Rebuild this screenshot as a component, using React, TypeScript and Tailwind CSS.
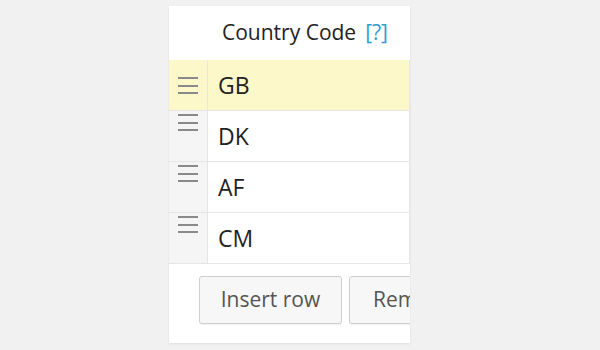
const rows = [
	{ code: "GB", active: true },
	{ code: "DK", active: false },
	{ code: "AF", active: false },
	{ code: "CM", active: false },
];

function Handle() {
	return (
		<div className="flex w-[20px] flex-col gap-[5.5px]">
			<span className="h-[2px] w-full bg-[#8a8a8a]" />
			<span className="h-[2px] w-full bg-[#8a8a8a]" />
			<span className="h-[2px] w-full bg-[#8a8a8a]" />
		</div>
	);
}

export default function App() {
	return (
		<div className="h-[350px] w-[600px] bg-[#f1f1f1] pt-[6px] pl-[169px] font-['Open_Sans',sans-serif]">
			<div className="h-[337px] w-[241px] overflow-hidden bg-white shadow-[0_1px_2px_rgba(0,0,0,0.08)]">
				<div className="flex h-[54px] items-center pl-[53px] text-[21px] text-[#222]">
					<span>Country Code</span>
					<span className="ml-[9px] text-[#2a9fd6]">[?]</span>
				</div>
				<div className="w-[241px]">
					{rows.map((row) => (
						<div
							key={row.code}
							className={
								row.active
									? "flex h-[51px] border-b border-[#e6e6e6] bg-[#fcf8c9]"
									: "flex h-[51px] border-b border-[#e6e6e6]"
							}
						>
							<div
								className={
									row.active
										? "flex w-[39px] items-center justify-center border-r border-[#e6e6e6] pt-[1px]"
										: "flex w-[39px] justify-center border-r border-[#e6e6e6] bg-[#f5f5f5] pt-[3px]"
								}
							>
								<Handle />
							</div>
							<div className="flex flex-1 items-center border-r border-[#e6e6e6] pl-[10px] text-[23px] text-[#222]">
								{row.code}
							</div>
						</div>
					))}
				</div>
				<div className="flex gap-[7px] pt-[12px] pl-[30px]">
					<button className="h-[48px] w-[143px] shrink-0 rounded-[3px] border border-[#cfcfcf] bg-[#f7f7f7] text-[21px] text-[#555] shadow-[0_1px_1px_rgba(0,0,0,0.06)]">
						Insert row
					</button>
					<button className="h-[48px] w-[170px] shrink-0 rounded-[3px] border border-[#cfcfcf] bg-[#f7f7f7] text-[21px] text-[#555] shadow-[0_1px_1px_rgba(0,0,0,0.06)]">
						Remove row
					</button>
				</div>
			</div>
		</div>
	);
}
